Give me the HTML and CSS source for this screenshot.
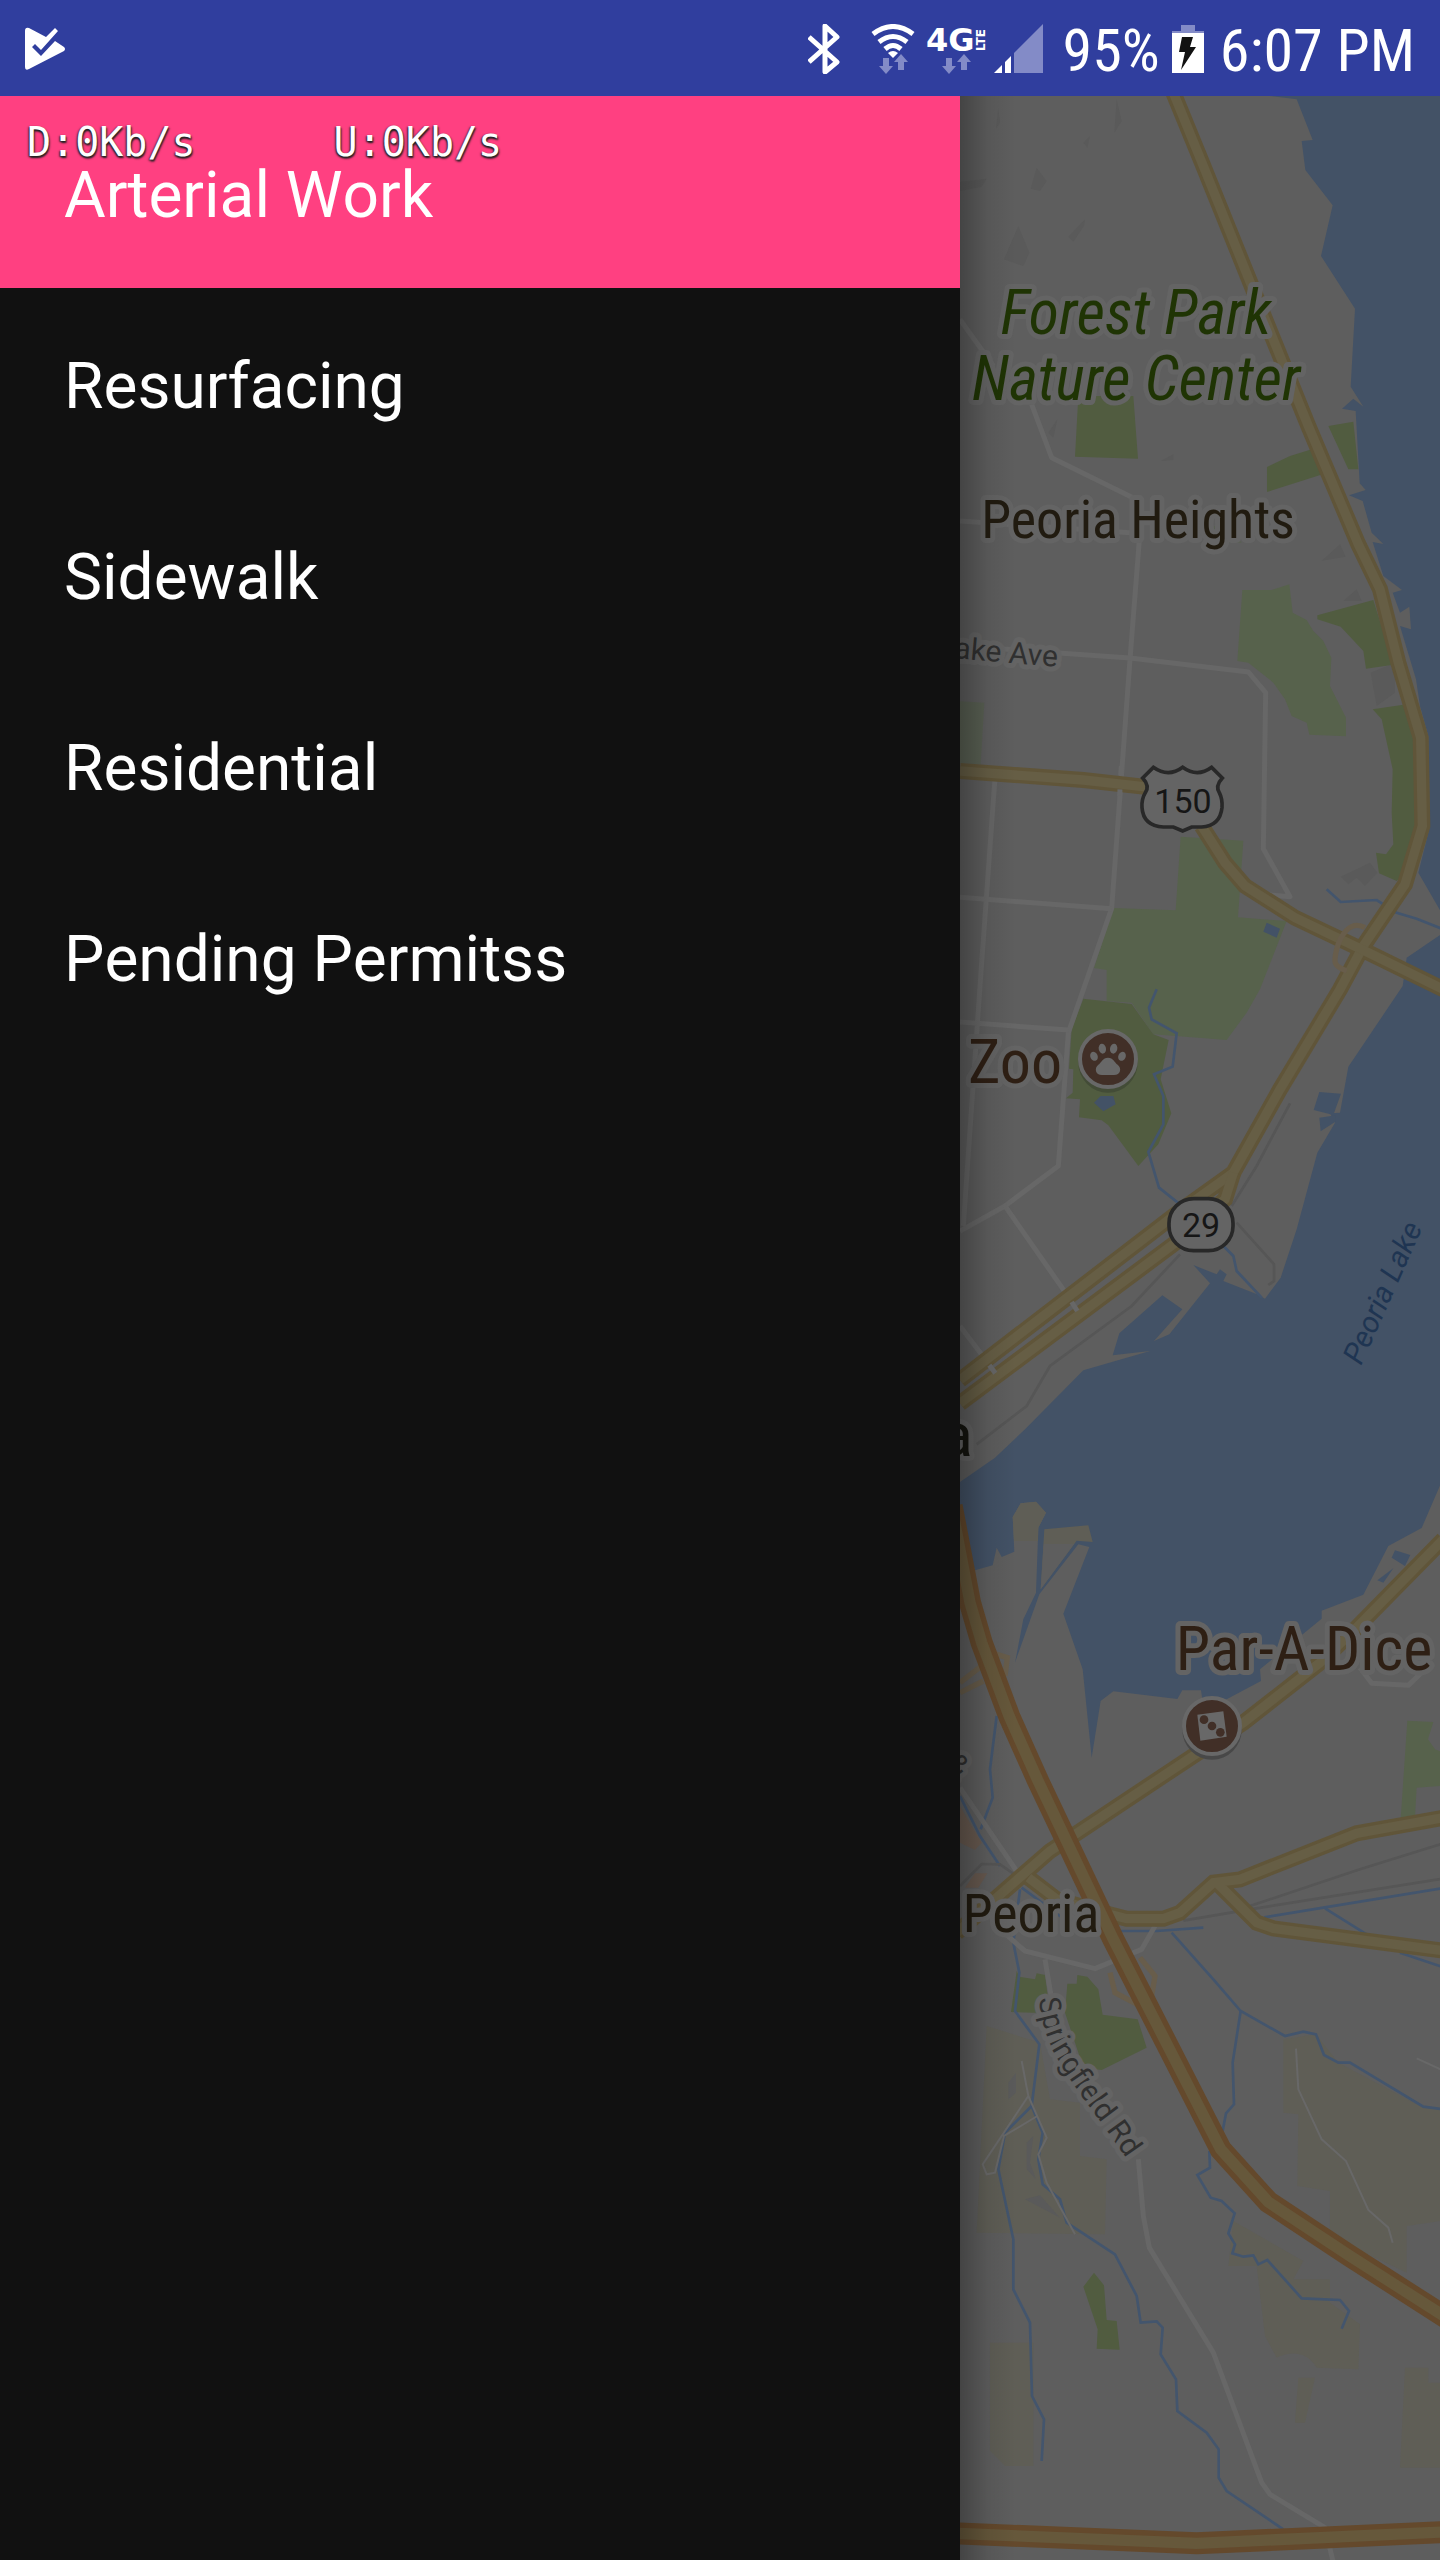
FILE: index.html
```html
<!DOCTYPE html>
<html lang="en">
<head>
<meta charset="utf-8">
<meta name="viewport" content="width=device-width, initial-scale=1">
<title>Road Work Map</title>
<link rel="stylesheet" href="styles.css">
</head>
<body>
<div class="screen">
  <header class="status">
    <svg class="icon icon-play" viewBox="24 26 42 46" aria-hidden="true">
      <path fill="#fff" d="M25 31q0-4 4-3l17 9 9-9 3 3-17 19-6-6-3 3 9 9 14-15 9 6q2 2 0 4L29 69q-4 2-4-2z"/>
    </svg>
    <div class="status-right">
      <svg class="icon icon-bt" viewBox="807 24 32 50" aria-hidden="true">
        <path fill="none" stroke="#fff" stroke-width="5" stroke-linejoin="round" d="M808 37l28 25-12 10V26l12 11-28 25"/>
      </svg>
      <svg class="icon icon-wifi" viewBox="870 24 44 50" aria-hidden="true">
        <g fill="none" stroke="#fff" stroke-width="5">
          <path d="M872 34q20-15 40 0"/><path d="M878 42q14-11 28 0"/><path d="M884 49q8-7 16 0"/>
        </g>
        <path fill="#fff" d="M887 53q5-4 10 0l-5 5z"/>
        <path fill="#838bc7" d="M882 58h6v8h4l-7 8-7-8h4zM897 70v-8h-4l7-8 7 8h-4v8z"/>
      </svg>
      <svg class="icon icon-lte" viewBox="925 24 61 50" role="img" aria-label="4G LTE">
        <text class="net" x="925" y="51">4G</text>
        <text class="lte" transform="translate(984 51) rotate(-90)">LTE</text>
        <path fill="#838bc7" d="M945 58h6v8h4l-7 8-7-8h4zM960 70v-8h-4l7-8 7 8h-4v8z"/>
      </svg>
      <svg class="icon icon-signal" viewBox="993 24 49 50" aria-hidden="true">
        <path fill="#838bc7" d="M1013 53l29-29v49h-29z"/>
        <path fill="#fff" d="M993 73l8-8v8zM1004 62l6-6v17h-6z"/>
      </svg>
      <span class="battery-level">95%</span>
      <svg class="icon icon-battery" viewBox="1172 24 32 50" aria-hidden="true">
        <path fill="#838bc7" d="M1181 25h14v6h9v3h-32v-3h9z"/>
        <path fill="#fff" d="M1172 33h32v40h-32z"/>
        <path fill="#111" d="M1182 37h11l-3 10h6l-15 23 4-18h-6z"/>
      </svg>
      <time class="clock">6:07 PM</time>
    </div>
  </header>

  <main class="stage">
    <nav class="drawer" aria-label="Work types">
      <a class="item selected" href="#arterial">Arterial Work</a>
      <a class="item" href="#resurfacing">Resurfacing</a>
      <a class="item" href="#sidewalk">Sidewalk</a>
      <a class="item" href="#residential">Residential</a>
      <a class="item" href="#permits">Pending Permitss</a>
    </nav>
    <section class="map" aria-label="Map of Peoria">
      <svg class="map-canvas" viewBox="960 96 480 2464">
        <g transform="translate(950 96) scale(.333333)">
          <!-- Farmland -->
          <g fill="#5f5e56">
            <path d="M110 5790L270 5840 300 6010 390 6020V6180L470 6190 465 6415 80 6410z"/>
            <path d="M120 6740H250V7110H165L120 7065z"/>
            <path d="M1000 5830L1098 5815 1165 5900 1420 6035H1470V6375L1370 6390V6530L1140 6420V6285L1042 6270 1045 6055 1000 6050z"/>
            <path d="M850 6375L1060 6495 1030 6550H1140V6620L1230 6685 1225 6820 1100 6815Q1060 6750 980 6785L945 6720 920 6510H835z"/>
            <path d="M1045 6845H1095L1065 6980H1035zM1365 6815H1435V6860H1470V7115H1350z"/>
          </g>
          <!-- Terrain shading -->
          <g fill="#5a5a5a">
            <path d="M205 390L238 470 220 510 162 490zM260 215L290 255 270 285 242 278zM405 370L402 390 370 437 355 422zM500 10L515 75 493 110zM145 35L150 80 138 98zM420 120L412 155 400 140zM30 258L110 248 95 272 30 285zM322 970L310 1025 295 1010zM670 1075V1092L632 1095zM1115 1394L1170 1345 1187 1382zM1180 1515L1220 1480 1235 1515zM1262 1730L1335 1700V1790L1280 1830zM1172 2342L1260 2300 1282 2330 1245 2370 1220 2345 1195 2365zM230 6140L250 6120 240 6200 258 6250 230 6220zM198 5930V5990L175 6010V5960zM225 6310L270 6298 330 6365z"/>
          </g>
          <!-- Parks -->
          <g fill="#57624c">
            <path d="M877 1482H965L1018 1465 1028 1550 1070 1572 1090 1605 1120 1635 1144 1685 1140 1770 1188 1865V1921L1078 1916 1070 1880 1025 1860 1005 1810 970 1760 895 1700 862 1695z"/>
            <path d="M692 2222L880 2234 864 2464 1010 2475 930 2680 890 2750 830 2832 610 2815 545 2720 470 2715V2622L432 2616 490 2436 677 2443z"/>
            <path d="M30 1816L103 1820 92 2005 30 2002zM790 1290H840L875 1340H800z" opacity=".6"/>
            <path d="M1372 4874L1450 4878 1434 4930 1455 4960 1470 4966V5070L1400 5075 1395 5162 1352 5168z"/>
          </g>
          <g fill="#515c40">
            <path d="M385 900H550L564 1088 375 1082zM1135 990L1210 977 1225 1120H1195zM951 1113L1020 1080 1090 1058 1118 1135 951 1188z"/>
            <path d="M1102 1558V1570L1172 1592 1240 1665 1248 1718 1330 1706 1270 1512z"/>
            <path d="M400 2708L545 2724 610 2815 656 2832 632 2950 664 3052 625 3145 565 3210 475 3088 455 3073 387 3064 390 3010 348 3007 368 2990 370 2920 357 2918 365 2800z"/>
            <path d="M200 5625L208 5642 255 5650 260 5632 285 5637 300 5752 183 5748zM352 5663H380L382 5637 412 5642 445 5680 458 5756 563 5770 590 5855 455 5922 400 5915 345 5750z"/>
            <path d="M432 6530L462 6568 470 6672 500 6675 509 6761 440 6758 443 6700 400 6572z"/>
          </g>
          <!-- River and lake -->
          <g fill="#435266">
            <path d="M960 0L1040 10 1088 132 1055 135 1066 222 1148 328 1113 480 1215 638 1202 872 1240 932 1210 908 1176 938 1217 945 1229 1162 1247 1182 1197 1198 1238 1215 1265 1310 1300 1344 1268 1338 1300 1440 1356 1482 1328 1490 1350 1550 1378 1532 1383 1600 1350 1590 1398 1750 1410 1830 1435 1920 1440 2190 1405 2330 1480 2460V0z"/>
            <path d="M1480 2510L1370 2585 1358 2670 1195 2912 1170 3050 1140 3052 1155 3080 1102 3170 1040 3400 992 3545 945 3608 925 3596 820 3555 830 3535 810 3520 800 3535 730 3507 780 3562 658 3715 612 3735 697 3640 637 3598 508 3712 488 3778 600 3765 400 3823 225 4000 135 4085 20 4165V4235L75 4423 128 4408 140 4355 155 4383 193 4367 188 4263 212 4222 258 4217 288 4250 265 4295 258 4490 220 4570 195 4700 268 4495 385 4345 418 4353 340 4553 398 4720 425 4985 452 4815 490 4786 682 4809 697 4783H753L757 4810H830L933 4755 930 4720 1115 4568V4544L1240 4496 1315 4350 1415 4296 1480 4145z"/>
            <path d="M950 2480L990 2498 980 2525 940 2507zM432 3020L452 3000H490L497 3025 460 3046zM1108 2988L1173 2993 1150 3057 1091 3042zM1108 3065L1158 3058 1155 3078 1112 3106zM1335 4363L1381 4377 1365 4410 1325 4385zM1282 4453L1330 4417 1300 4460z"/>
          </g>
          <path fill="#5f5e56" d="M283 4300L415 4288 428 4338 380 4334 272 4480zM192 4335L188 4263 212 4222 258 4217 288 4250 265 4295 264 4335z"/>
          <path fill="#5e5e5e" d="M281 4344H372L272 4480z"/>
          <path fill="#515c40" d="M1268 1840L1360 1826 1434 1930 1438 2190 1400 2300 1340 2355 1287 2332 1278 2270 1308 2275 1330 2245 1325 2150 1328 2020 1295 1870z"/>
          <!-- Creeks -->
          <g fill="none" stroke="#43556d" stroke-width="8">
            <path d="M1130 2380L1172 2418 1280 2412 1340 2450 1400 2468 1480 2500"/>
            <path d="M620 2680L597 2735 605 2770 680 2812 668 2912 612 2935 640 3000V3085L595 3168 627 3275 690 3325"/>
            <path d="M820 3450L850 3480 860 3525 935 3605M140 4860L120 5020 128 5105 92 5200M30 5100L90 5220 150 5310"/>
            <path d="M215 5375L330 5460 500 5505H620L760 5495"/>
            <path d="M210 5380L190 5540 208 5630 195 5745 268 5845 245 6030 278 6110 265 6190 278 6265 330 6310 350 6380 495 6475 560 6600 572 6680 620 6676 638 6695 632 6775 678 6850 682 6945 770 7010 806 7060V7145L830 7185 1000 7300"/>
            <path d="M245 6030L165 6110 145 6220 190 6430V6580L240 6680 246 6900 282 6970 275 7095"/>
            <path d="M665 5510L790 5650 872 5745 1005 5820 1060 5807 1098 5815 1122 5877 1165 5900H1200L1420 6032 1480 6040"/>
            <path d="M872 5745L848 5900 852 6025 828 6052 818 6105"/>
            <path d="M778 6165L780 6215 742 6237 782 6305 815 6315 854 6352 835 6412 855 6445 847 6472 880 6482 910 6478 925 6505 952 6492 1055 6607 1170 6612 1197 6645 1175 6698"/>
            <path d="M943 5464L1120 5435 1480 5376M1125 5437L1250 5515M1350 5570L1480 5614"/>
          </g>
          <!-- Railways -->
          <g fill="none" stroke="#565656" stroke-width="8">
            <path d="M700 5474L900 5440 1480 5348M900 5430L1230 5320 1480 5242"/>
            <path d="M1020 3022L920 3210 845 3330M860 3380L972 3505V3555L955 3567M690 3475L545 3630 300 3810 230 3930 80 4045M30 5370L95 5304 150 5305 200 5340"/>
          </g>
          <path fill="#685a50" d="M45 5375L75 5332H112L85 5375zM30 5130L95 5240 75 5262 30 5240z"/>
          <!-- Local roads -->
          <g fill="none" stroke="#676767" stroke-width="15" stroke-linejoin="round">
            <path d="M30 670L130 810M245 925L305 1085 555 1208 568 1332 540 1690 485 2437 355 2810 325 3210 165 3330 30 3405M30 1275L540 1310"/>
            <path d="M30 1650L540 1686 895 1728 947 1790 940 2258 1020 2402 940 2395"/>
            <path d="M135 2045L90 2670 40 3390M30 2404L485 2438M30 2778L355 2802M165 3330L350 3595M30 3690L100 3782"/>
            <path d="M1230 4715L1265 4762 1375 4768 1430 4715M30 5075L210 5340M150 5500L225 5565 435 5618 575 5560 615 5490M285 5590L305 5710M565 6190L580 6360 598 6455 790 6770 935 7160 960 7195 1125 7295 1150 7400"/>
          </g>
          <g fill="none" stroke="#686868" stroke-width="6">
            <path d="M215 5895L235 6000 290 6125 265 6175 290 6260 375 6415M235 6000L98 6205 110 6235 135 6230 162 6120 262 6060M1038 5858L1045 5980 1115 6130 1188 6195 1255 6342 1315 6395 1328 6440M1400 5887L1480 5924"/>
          </g>
          <!-- State highways -->
          <g fill="none" stroke="#605539" stroke-width="48">
            <path d="M670 -10L760 210 905 570 1075 990 1225 1345 1290 1480 1345 1700 1412 1925 1417 2190 1365 2365 1240 2550 1170 2680 990 2980 850 3230 690 3345 30 3852"/>
            <path d="M850 3230L825 3310 690 3430 30 3922"/>
            <path d="M30 2025L400 2052 600 2074M755 2190L825 2300 885 2370 1035 2465 1245 2565 1480 2680"/>
            <path d="M1480 4330L1215 4600 1110 4700 880 4880 300 5265 20 5510"/>
            <path d="M235 5345L320 5410 460 5450 530 5468H640L690 5450 790 5360 870 5350 1220 5212 1480 5165M800 5360L920 5480 970 5497 1480 5564"/>
          </g>
          <g fill="none" stroke="#665e45" stroke-width="28">
            <path d="M670 -10L760 210 905 570 1075 990 1225 1345 1290 1480 1345 1700 1412 1925 1417 2190 1365 2365 1240 2550 1170 2680 990 2980 850 3230 690 3345 30 3852"/>
            <path d="M850 3230L825 3310 690 3430 30 3922"/>
            <path d="M30 2025L400 2052 600 2074M755 2190L825 2300 885 2370 1035 2465 1245 2565 1480 2680"/>
            <path d="M1480 4330L1215 4600 1110 4700 880 4880 300 5265 20 5510"/>
            <path d="M235 5345L320 5410 460 5450 530 5468H640L690 5450 790 5360 870 5350 1220 5212 1480 5165M800 5360L920 5480 970 5497 1480 5564"/>
          </g>
          <!-- Ramps -->
          <path fill="none" stroke="#685d4b" stroke-width="16" d="M1245 2495C1200 2470 1170 2520 1160 2560S1150 2610 1190 2625M30 4760L140 4675 172 4685 165 4740M30 4790L100 4755M480 5630L495 5690 590 5740M570 5585L615 5640 605 5700"/>
          <path fill="none" stroke="#676767" stroke-width="15" d="M365 3618L382 3645M118 3808L136 3832M512 2038L514 2010M510 2080L509 2100"/>
          <!-- Interstates -->
          <path fill="none" stroke="#64492c" stroke-width="66" d="M5 4230L60 4520 95 4640 178 4862 262 5050 390 5320 490 5530 812 6160 955 6318 1200 6480 1500 6672M20 7312L740 7342 1480 7308"/>
          <path fill="none" stroke="#66583b" stroke-width="34" d="M5 4230L60 4520 95 4640 178 4862 262 5050 390 5320 490 5530 812 6160 955 6318 1200 6480 1500 6672M20 7312L740 7342 1480 7308"/>
          <!-- Route shields -->
          <g fill="#646464" stroke="#282828" stroke-width="11">
            <path d="M578 2046L610 2014Q655 2046 698 2014 742 2046 785 2014L817 2046Q795 2070 808 2090 818 2110 816 2135 810 2190 755 2193H725L698 2205 670 2193H640Q580 2190 576 2135 574 2110 586 2090 600 2070 578 2046z"/>
            <rect x="657" y="3308" width="192" height="156" rx="74"/>
          </g>
          <!-- Zoo pin -->
          <circle cx="474" cy="2901" r="89" fill="#434c37"/>
          <circle cx="474" cy="2889" r="84" fill="#412f27" stroke="#686868" stroke-width="12"/>
          <g fill="#686868">
            <ellipse cx="457" cy="2858" rx="11" ry="15" transform="rotate(-10 457 2858)"/>
            <ellipse cx="491" cy="2858" rx="11" ry="15" transform="rotate(10 491 2858)"/>
            <ellipse cx="432" cy="2881" rx="11" ry="14" transform="rotate(-25 432 2881)"/>
            <ellipse cx="516" cy="2881" rx="11" ry="14" transform="rotate(25 516 2881)"/>
            <path d="M474 2885C490 2885 494 2900 503 2906 516 2916 512 2937 492 2937H456C436 2937 432 2916 445 2906 454 2900 458 2885 474 2885z"/>
          </g>
          <!-- Casino pin -->
          <circle cx="786" cy="4902" r="89" fill="#484848"/>
          <circle cx="786" cy="4890" r="84" fill="#412f27" stroke="#686868" stroke-width="12"/>
          <path fill="#686868" d="M742 4856L820 4846 830 4922 751 4934z"/>
          <g fill="#412f27"><circle cx="762" cy="4871" r="13"/><circle cx="786" cy="4890" r="13"/><circle cx="811" cy="4909" r="13"/></g>
        </g>

        <defs><path id="springfield" d="M1039 1998Q1042 2032 1056 2056 1066 2076 1097 2117L1117 2145 1150 2192"/></defs>
        <g class="labels">
          <text class="big park" x="1136" y="334">Forest Park</text>
          <text class="big park" x="1136" y="400">Nature Center</text>
          <text class="town" x="1138" y="538">Peoria Heights</text>
          <text class="street end" transform="translate(1057 667) rotate(5)">ake Ave</text>
          <text class="route" x="1183" y="813">150</text>
          <text class="big poi" x="1015" y="1083">Zoo</text>
          <text class="route" x="1201" y="1237">29</text>
          <text class="lake" transform="translate(1361 1366) rotate(-66)">Peoria Lake</text>
          <text class="city" x="973" y="1456">a</text>
          <text class="big poi" x="1304" y="1670">Par-A-Dice</text>
          <text class="street" transform="translate(944 1766) rotate(45)">&amp;</text>
          <text class="town" x="1031" y="1932">Peoria</text>
          <text class="street"><textPath href="#springfield">Springfield Rd</textPath></text>
        </g>
      </svg>
    </section>
    <div class="speed">
      <span class="speed-value">D:0Kb/s</span>
      <span class="speed-value">U:0Kb/s</span>
    </div>
  </main>
</div>
</body>
</html>
```

FILE: styles.css
```css
* {
  box-sizing: border-box;
}

body {
  margin: 0;
  background: #111;
  font-family: "Roboto Condensed", Roboto, sans-serif;
}

.screen {
  display: flex;
  flex-direction: column;
  min-height: 100vh;
}

/* Status bar */
.status {
  display: flex;
  align-items: center;
  justify-content: space-between;
  height: 96px;
  padding: 2px 25px 0 24px;
  background: #303e9e;
  color: #fff;
}

.status-right {
  display: flex;
  align-items: center;
}

.icon {
  display: block;
  flex: none;
  height: 50px;
}

.icon-play { width: 42px; height: 46px; }
.icon-bt { width: 32px; margin-right: 31px; }
.icon-wifi { width: 44px; margin-right: 11px; }
.icon-lte { width: 61px; margin-right: 7px; }
.icon-signal { width: 49px; margin-right: 20px; }
.icon-battery { width: 32px; margin: 0 16px 0 12px; }

.battery-level,
.clock {
  padding-top: 4px;
  font-size: 60px;
  line-height: 60px;
  white-space: nowrap;
}

.net,
.lte {
  fill: #fff;
  font-family: "DejaVu Sans", sans-serif;
  font-weight: bold;
}

.net { font-size: 32px; }
.lte { font-size: 12px; }

/* Drawer and map */
.stage {
  position: relative;
  display: grid;
  grid-template-columns: 2fr 1fr;
  flex: 1;
}

.drawer {
  display: flex;
  flex-direction: column;
  background: #111;
}

.item {
  display: flex;
  align-items: center;
  height: 191px;
  padding: 8px 64px 0;
  color: #fff;
  font-family: Roboto, sans-serif;
  font-size: 64px;
  font-kerning: none;
  line-height: 76px;
  text-decoration: none;
}

.selected {
  background: #ff4081;
  box-shadow: 0 1px #ff4081;
}

.map {
  position: relative;
  background: #5e5e5e;
}

/* Shadow cast by the drawer */
.map::before {
  content: "";
  position: absolute;
  inset: 0 auto 0 0;
  width: 56px;
  background: linear-gradient(to right, rgba(0, 0, 0, .28), rgba(0, 0, 0, .08) 50%, transparent);
}

.map-canvas {
  display: block;
  width: 100%;
  height: auto;
}

.labels text {
  paint-order: stroke;
  stroke: #646464;
  stroke-width: 10px;
  stroke-linejoin: round;
}

.labels .big,
.labels .town,
.labels .route {
  text-anchor: middle;
}

.labels .big { font-size: 62px; }
.labels .park { fill: #1f3404; font-style: italic; }
.labels .poi { fill: #2e1f14; }
.labels .town { fill: #211b10; font-size: 54px; }

.labels .street,
.labels .route,
.labels .lake,
.labels .city {
  font-family: Roboto, sans-serif;
}

.labels .street { fill: #303030; font-size: 30px; }
.labels .end { text-anchor: end; }
.labels .route { fill: #161616; font-size: 34px; stroke: none; }
.labels .lake { fill: #1f3552; font-style: italic; font-size: 30px; stroke: none; }
.labels .city { fill: #14140e; font-size: 62px; text-anchor: end; }

/* Network speed overlay */
.speed {
  position: absolute;
  top: 23px;
  left: 27px;
  display: flex;
  gap: 138px;
  color: #fff;
  font-family: "DejaVu Sans Mono", monospace;
  font-size: 40px;
  line-height: 46px;
  text-shadow: -1px 1px 2px #222, 1px 2px 2px #222;
}
```
